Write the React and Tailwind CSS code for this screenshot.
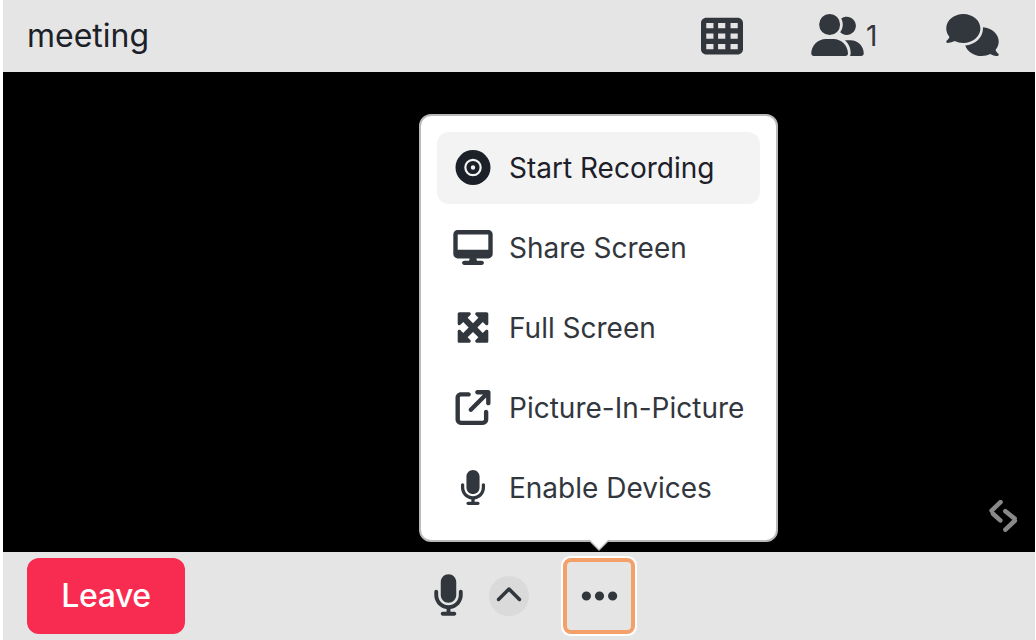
import React from "react";
import {
  FaTableCells,
  FaUserGroup,
  FaComments,
  FaRecordVinyl,
  FaDesktop,
  FaMaximize,
  FaArrowUpRightFromSquare,
  FaMicrophone,
  FaChevronUp,
  FaEllipsis,
} from "react-icons/fa6";

const items = [
  { label: "Start Recording", Icon: FaRecordVinyl, size: "w-[36px] h-[35px]", active: true },
  { label: "Share Screen", Icon: FaDesktop, size: "w-[40px] h-[35px]" },
  { label: "Full Screen", Icon: FaMaximize, size: "w-[36px] h-[35px]" },
  { label: "Picture-In-Picture", Icon: FaArrowUpRightFromSquare, size: "w-[36px] h-[35px]" },
  { label: "Enable Devices", Icon: FaMicrophone, size: "w-[28px] h-[35px]" },
];

function Header() {
  return (
    <header className="flex h-[72px] shrink-0 items-center bg-[#e5e5e5] pl-6 pr-9">
      <h1 className="grow text-[32px] leading-10 text-[#1c2028]">meeting</h1>
      <FaTableCells className="mb-px h-[42px] w-[42px]" />
      <div className="ml-[68px] flex items-center">
        <FaUserGroup className="mb-[2px] h-[42px] w-[53px]" />
        <span className="ml-[2px] w-[13px] text-[28px] leading-10">1</span>
      </div>
      <FaComments className="mb-[2px] ml-[67px] h-[42px] w-[53px]" />
    </header>
  );
}

function Menu() {
  return (
    <div className="absolute bottom-[98px] left-[416px] w-[359px] rounded-xl border-2 border-[#b9b9b9] bg-white p-4">
      <ul className="flex flex-col gap-2">
        {items.map(({ label, Icon, size, active }) => (
          <li
            key={label}
            className={
              active
                ? "flex h-[72px] items-center rounded-xl bg-[#f3f3f3] pl-4 text-[#1c2028]"
                : "flex h-[72px] items-center rounded-xl pl-4"
            }
          >
            <span className="flex w-10 justify-center pb-px">
              <Icon className={size} />
            </span>
            <span className="ml-4 whitespace-nowrap text-[28px] leading-10">{label}</span>
          </li>
        ))}
      </ul>
      <svg className="absolute -bottom-[11px] left-[167px] h-[12px] w-[22px]" viewBox="0 0 22 12">
        <path d="M0 0H22L11 11Z" fill="#fff" />
        <path d="M1 1L11 11L21 1" fill="none" stroke="#b9b9b9" strokeWidth="1.4" />
      </svg>
    </div>
  );
}

function Footer() {
  return (
    <footer className="flex h-[88px] shrink-0 items-center bg-[#e5e5e5] pl-6">
      <button className="h-[76px] w-[158px] rounded-xl bg-[#f72c50] text-[32px] font-medium leading-10 tracking-[-0.4px] text-white">
        Leave
      </button>
      <FaMicrophone className="mb-[2px] ml-[248px] h-[42px] w-[31px]" />
      <button className="ml-[25px] flex h-10 w-10 items-center justify-center rounded-full bg-[#dadada]">
        <FaChevronUp className="mb-px h-7 w-7" />
      </button>
      <button className="ml-[32px] flex h-20 w-[76px] items-center justify-center rounded-[9px] bg-white p-[2px]">
        <span className="flex h-full w-full items-center justify-center rounded-[8px] border-4 border-[#f3a169] bg-[#e5e5e5]">
          <FaEllipsis className="mb-px h-[42px] w-[37px]" />
        </span>
      </button>
    </footer>
  );
}

export default function App() {
  return (
    <div className="h-[640px] w-[1036px] overflow-hidden bg-white pl-[3px] pr-px font-['Inter',sans-serif] text-[#32363d]">
      <div className="relative flex h-full flex-col">
        <Header />
        <main className="flex grow items-end justify-end bg-black pb-5 pr-[15px]">
          <svg className="h-8 w-8" viewBox="0 0 32 32" fill="none" stroke="#898989" strokeWidth="4.6" strokeLinecap="round">
            <path d="M12.5 2.2L3.6 10.6M5 13.8L12.3 20.4M17.4 11.2L26.6 18.6M26.8 20.8L17.4 29.6" />
          </svg>
        </main>
        <Menu />
        <Footer />
      </div>
    </div>
  );
}
